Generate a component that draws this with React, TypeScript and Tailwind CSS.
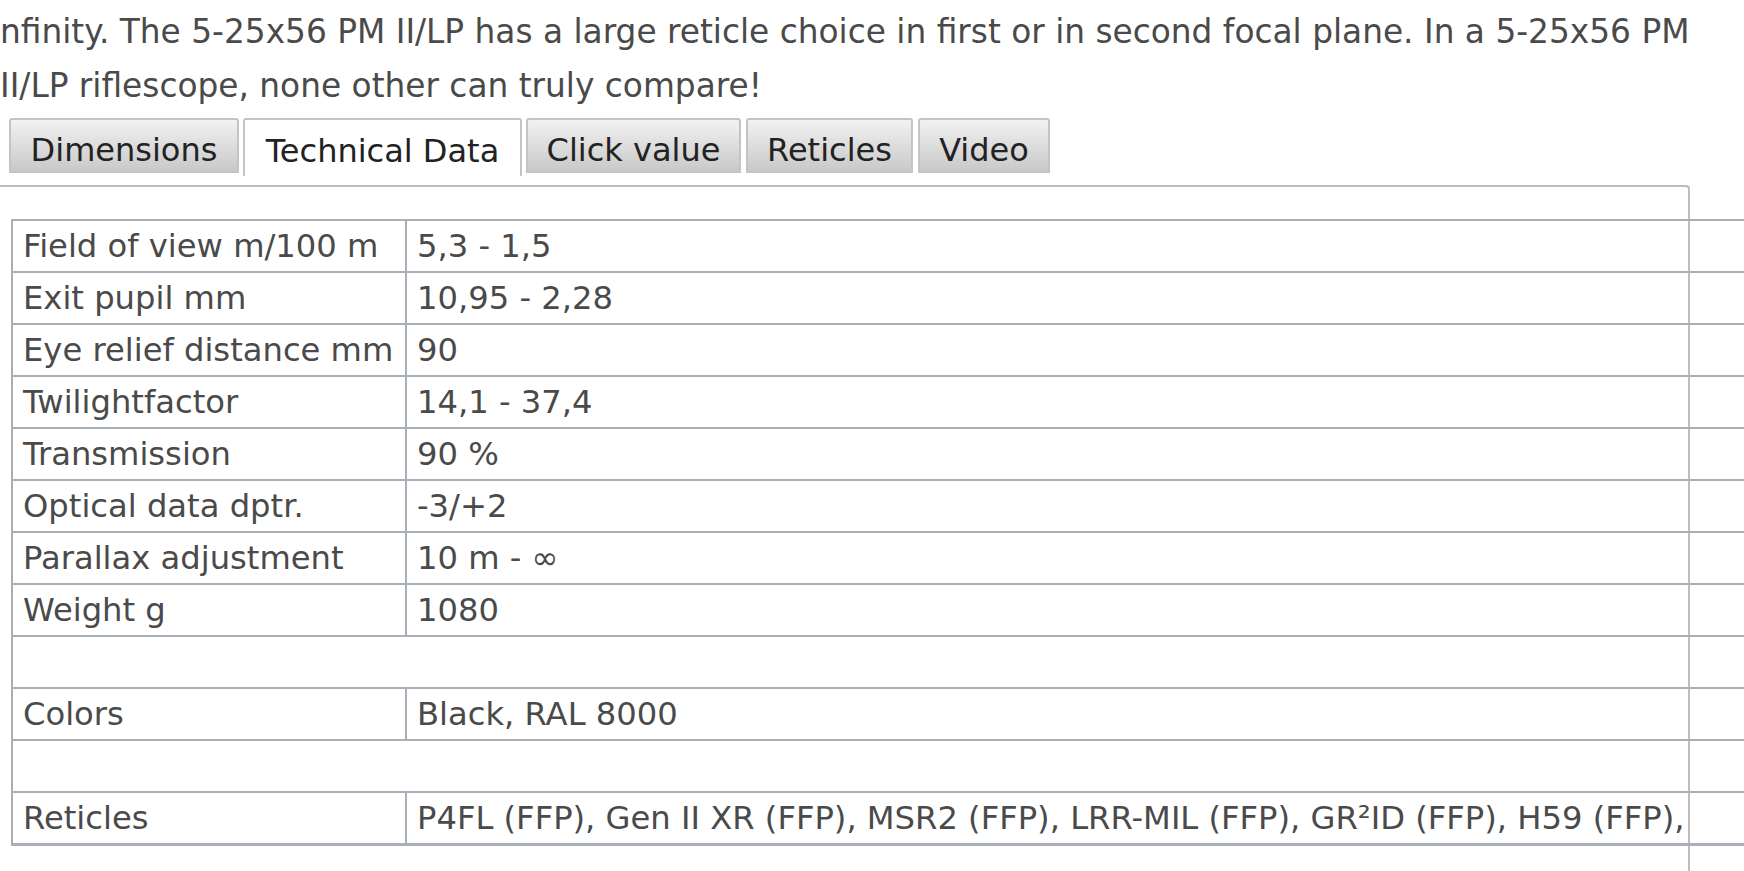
import React from "react";

const rows: [string, string][] = [
  ["Field of view m/100 m", "5,3 - 1,5"],
  ["Exit pupil mm", "10,95 - 2,28"],
  ["Eye relief distance mm", "90"],
  ["Twilightfactor", "14,1 - 37,4"],
  ["Transmission", "90 %"],
  ["Optical data dptr.", "-3/+2"],
  ["Parallax adjustment", "10 m - ∞"],
  ["Weight g", "1080"],
  ["", ""],
  ["Colors", "Black, RAL 8000"],
  ["", ""],
  ["Reticles", "P4FL (FFP), Gen II XR (FFP), MSR2 (FFP), LRR-MIL (FFP), GR²ID (FFP), H59 (FFP),"],
];

const tabs = [
  { label: "Dimensions", w: "w-[230px]", active: false },
  { label: "Technical Data", w: "w-[279px]", active: true },
  { label: "Click value", w: "w-[215px]", active: false },
  { label: "Reticles", w: "w-[167px]", active: false },
  { label: "Video", w: "w-[132px]", active: false },
];

export default function App() {
  return (
    <div className="w-[1744px] h-[871px] overflow-hidden bg-white font-['DejaVu_Sans',Verdana,sans-serif]">
      {/* intro text */}
      <div className="pt-[5px] text-[32.8px] leading-[54px] text-[#4a4a4a] whitespace-nowrap">
        <p>nfinity. The 5-25x56 PM II/LP has a large reticle choice in first or in second focal plane. In a 5-25x56 PM</p>
        <p>II/LP riflescope, none other can truly compare!</p>
      </div>

      {/* tabs */}
      <div className="mt-[5px] pl-[9px] flex items-start gap-[5px]">
        {tabs.map((t) =>
          t.active ? (
            <div
              key={t.label}
              className={`${t.w} h-[58px] flex items-center justify-center border-2 border-b-0 border-[#c4c4c4] rounded-t-[3px] bg-white text-[32px] text-[#222] -mx-px pt-[5px]`}
            >
              {t.label}
            </div>
          ) : (
            <div
              key={t.label}
              className={`${t.w} h-[55px] flex items-center justify-center border-2 border-[#c4c4c4] rounded-t-[3px] bg-gradient-to-b from-[#f2f2f2] to-[#c9c9c9] text-[32px] text-[#222] pt-[8px]`}
            >
              {t.label}
            </div>
          )
        )}
      </div>

      {/* panel */}
      <div className="mt-[9px] ml-[-4px] w-[1694px] h-[700px] border-t-2 border-r-2 border-[#bdbdbd] rounded-tr-[4px] pt-[32px] pl-[15px]">
        <table className="w-[1900px] border-collapse border-b-[3px] border-[#a9afb7] text-[32.2px] text-[#4a4a4a] whitespace-nowrap">
          <tbody>
            {rows.map(([k, v], i) =>
              k === "" ? (
                <tr key={i} className="h-[52px]">
                  <td colSpan={2} className="border-2 border-[#a9afb7]"></td>
                </tr>
              ) : (
                <tr key={i} className="h-[52px]">
                  <td className="w-[394px] border-2 border-[#a9afb7] pl-[10px] py-0 leading-[48px]">{k}</td>
                  <td className="border-2 border-[#a9afb7] pl-[10px] py-0 leading-[48px]">{v}</td>
                </tr>
              )
            )}
          </tbody>
        </table>
      </div>
    </div>
  );
}
